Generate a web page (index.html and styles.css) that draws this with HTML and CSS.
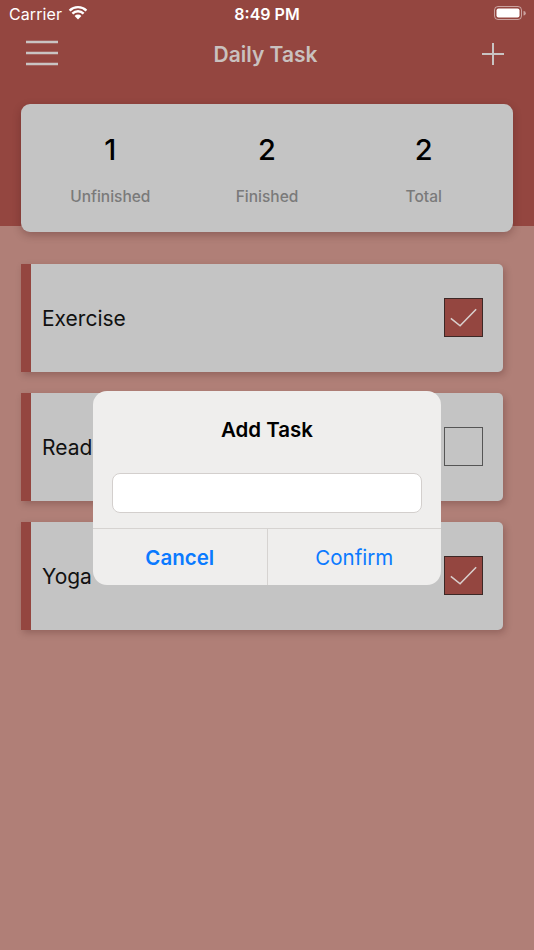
FILE: index.html
```html
<!DOCTYPE html>
<html>
<head>
<meta charset="utf-8">
<link rel="stylesheet" href="styles.css">
</head>
<body>
<div class="screen">
  <div class="status">
    <div class="carrier">Carrier
      <svg class="wifi" width="20" height="15" viewBox="0 0 20 15"><path d="M10 14.5 L6.6 11 A4.8 4.8 0 0 1 13.4 11 Z" fill="#fff"/><path d="M4.4 8.6 A8 8 0 0 1 15.6 8.6" stroke="#fff" stroke-width="2.4" fill="none"/><path d="M1.6 5.6 A12 12 0 0 1 18.4 5.6" stroke="#fff" stroke-width="2.4" fill="none"/></svg>
    </div>
    <div class="time">8:49 PM</div>
    <div class="battery"><svg width="32" height="15" viewBox="0 0 32 15"><rect x="0.5" y="0.5" width="27" height="13" rx="3.5" fill="none" stroke="#fff" stroke-opacity="0.5"/><rect x="2.5" y="2.5" width="23" height="9" rx="2" fill="#fff"/><path d="M29.5 5 A2.2 2.2 0 0 1 29.5 9.5 Z" fill="#fff" fill-opacity="0.5"/></svg></div>
  </div>
  <div class="nav">
    <svg class="menu" width="32" height="26" viewBox="0 0 32 26"><path d="M0 2 H32 M0 13 H32 M0 24 H32" stroke="#c9c4c3" stroke-width="2.4"/></svg>
    <div class="title">Daily Task</div>
    <svg class="plus" width="24" height="24" viewBox="0 0 24 24"><path d="M12 1 V23 M1 12 H23" stroke="#c9c4c3" stroke-width="2"/></svg>
  </div>
  <div class="stats">
    <div class="stat"><div class="num">1</div><div class="label">Unfinished</div></div>
    <div class="stat"><div class="num">2</div><div class="label">Finished</div></div>
    <div class="stat"><div class="num">2</div><div class="label">Total</div></div>
  </div>
  <div class="tasks">
    <div class="task"><span class="name">Exercise</span><span class="box checked"><svg width="38" height="38" viewBox="0 0 38 38"><path d="M6 20.5 L15.5 28 L32 11" stroke="#d9cfcd" stroke-width="1.6" fill="none"/></svg></span></div>
    <div class="task"><span class="name">Reading</span><span class="box"></span></div>
    <div class="task"><span class="name">Yoga</span><span class="box checked"><svg width="38" height="38" viewBox="0 0 38 38"><path d="M6 20.5 L15.5 28 L32 11" stroke="#d9cfcd" stroke-width="1.6" fill="none"/></svg></span></div>
  </div>
  <div class="alert">
    <div class="alert-title">Add Task</div>
    <div class="alert-input"></div>
    <div class="alert-buttons">
      <div class="btn cancel">Cancel</div>
      <div class="btn confirm">Confirm</div>
    </div>
  </div>
</div>
</body>
</html>
```
FILE: styles.css
```css
* { box-sizing: border-box; }
html, body { margin: 0; padding: 0; }
body {
  width: 534px;
  height: 950px;
  overflow: hidden;
  font-family: Inter, "Noto Sans", sans-serif;
}
.screen {
  position: relative;
  width: 534px;
  height: 950px;
  background: linear-gradient(#944640 0, #944640 226px, #b07f77 226px);
}
.status {
  height: 28px;
  display: flex;
  align-items: center;
  justify-content: space-between;
  padding: 0 8px 0 9px;
  color: #fff;
  font-size: 16px;
  position: relative;
}
.carrier { display: flex; align-items: center; gap: 6px; letter-spacing: 0.1px; }
.wifi { margin-top: -3px; }
.time {
  position: absolute;
  left: 0; right: 0;
  text-align: center;
  font-weight: 600;
  pointer-events: none;
}
.battery { display: flex; margin-top: -1px; }
.nav {
  height: 52px;
  display: grid;
  grid-template-columns: 1fr auto 1fr;
  align-items: center;
  padding: 0 29px 0 26px;
}
.menu { margin-top: -2px; justify-self: start; }
.title {
  color: #c9c1bf;
  font-size: 21px;
  font-weight: 600;
}
.plus { justify-self: end; }
.stats {
  margin: 24px 21px 0 21px;
  height: 128px;
  background: #c4c4c4;
  border-radius: 9px;
  box-shadow: 0 3px 8px rgba(60, 20, 20, 0.3);
  display: flex;
  padding: 0 11px;
}
.stat {
  flex: 1;
  display: flex;
  flex-direction: column;
  align-items: center;
  padding-top: 29px;
}
.num { font-size: 29px; font-weight: 500; color: #000; line-height: 34px; }
.label { margin-top: 20px; font-size: 15.5px; color: #7a7a7a; font-weight: 500; }
.tasks {
  margin: 32px 31px 0 21px;
  display: flex;
  flex-direction: column;
  gap: 21px;
}
.task {
  height: 108px;
  background: #c4c4c4;
  border-left: 10px solid #944640;
  border-radius: 0 5px 5px 0;
  box-shadow: 2px 3px 7px rgba(60, 20, 20, 0.25);
  display: flex;
  align-items: center;
  justify-content: space-between;
  padding: 0 20px 0 11px;
}
.name { font-size: 21px; color: #111; }
.box {
  width: 39px;
  height: 39px;
  border: 1.5px solid #555;
  display: flex;
  align-items: center;
  justify-content: center;
  margin-top: -2px;
}
.box.checked { background: #944640; border-color: #3c2826; }
.alert {
  position: absolute;
  left: 93px;
  top: 391px;
  width: 348px;
  height: 194px;
  background: #efeeed;
  border-radius: 14px;
  display: flex;
  flex-direction: column;
  overflow: hidden;
}
.alert-title {
  text-align: center;
  font-size: 20.5px;
  font-weight: 600;
  color: #000;
  padding-top: 26px;
  line-height: 26px;
}
.alert-input {
  margin: 30px 19px 0 19px;
  height: 40px;
  background: #fff;
  border: 1px solid #d3cfcd;
  border-radius: 8px;
}
.alert-buttons {
  margin-top: 15px;
  flex: 1;
  display: flex;
  border-top: 1px solid #d6d3d1;
}
.btn {
  flex: 1;
  display: flex;
  align-items: center;
  justify-content: center;
  font-size: 20.5px;
  color: #0a7aff;
}
.cancel { font-weight: 600; border-right: 1px solid #d6d3d1; }
```
